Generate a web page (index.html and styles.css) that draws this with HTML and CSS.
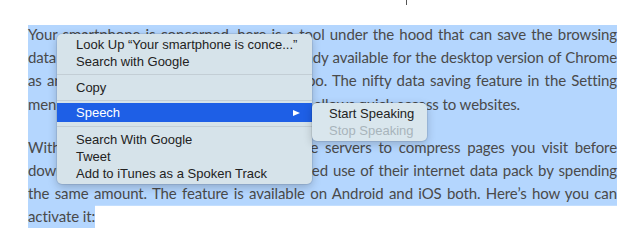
FILE: index.html
```html
<!DOCTYPE html>
<html lang="en">
<head>
<meta charset="utf-8">
<title>Data saver</title>
<link rel="stylesheet" href="styles.css">
</head>
<body>
<div class="caret"></div>
<article class="post">
  <p class="para para-full">Your smartphone is concerned, here is a tool under the hood that can save the browsing data usage in a big way. This feature is already available for the desktop version of Chrome as an extension, and now it is on mobile too. The nifty data saving feature in the Setting menu makes web pages load faster and also allows quick access to websites.</p>
  <p class="para para-partial">With this feature on, Chrome uses Google servers to compress pages you visit before downloading them. Users can make extended use of their internet data pack by spending the same amount. The feature is available on Android and iOS both. Here’s how you can <span class="sel">activate it:</span></p>
</article>
<div class="menu">
  <div class="item">Look Up “Your smartphone is conce...”</div>
  <div class="item">Search with Google</div>
  <div class="sep"></div>
  <div class="item">Copy</div>
  <div class="sep sep-tight"></div>
  <div class="item item-active">
    <span>Speech</span><span class="arrow"></span>
    <div class="submenu">
      <div class="item">Start Speaking</div>
      <div class="item item-disabled">Stop Speaking</div>
    </div>
  </div>
  <div class="sep"></div>
  <div class="item">Search With Google</div>
  <div class="item">Tweet</div>
  <div class="item">Add to iTunes as a Spoken Track</div>
</div>
</body>
</html>
```
FILE: styles.css
```css
html, body {
  margin: 0;
  padding: 0;
  background: #ffffff;
}

body {
  position: relative;
  width: 640px;
  height: 246px;
  overflow: hidden;
}

.caret {
  position: absolute;
  left: 406px;
  top: 0;
  width: 1px;
  height: 5px;
  background: #555;
}

.post {
  margin: 23px 23px 0 28px;
  font-family: "Lato", "Open Sans", sans-serif;
  font-size: 15px;
  letter-spacing: -0.1px;
  line-height: 23.2px;
  color: #4a4a4a;
  text-align: justify;
}

.para {
  margin: 0;
}

.para-full {
  padding-bottom: 20px;
  background: linear-gradient(#b4d6fe, #b4d6fe) 0 2px / 100% 100% no-repeat;
}

.para-partial {
  background: linear-gradient(#b4d6fe, #b4d6fe) 0 0 / 100% calc(100% - 23.2px) no-repeat;
}

.sel {
  background: #b4d6fe;
  padding: 3px 0;
}

.menu {
  position: absolute;
  left: 57px;
  top: 34px;
  width: 255px;
  padding: 2px 0;
  box-sizing: border-box;
  background: #d6e3ea;
  border-radius: 5px;
  box-shadow: 0 3px 10px rgba(0, 0, 0, 0.22), 0 0 0 1px rgba(0, 0, 0, 0.07);
  font-family: "Liberation Sans", Arial, sans-serif;
  font-size: 13px;
  color: #222;
}

.item {
  position: relative;
  height: 17px;
  line-height: 17px;
  padding: 0 12px 0 19px;
  display: flex;
  align-items: center;
  justify-content: space-between;
  white-space: nowrap;
}

.sep {
  height: 1px;
  margin: 4px 0;
  background: #c3ced5;
}

.sep-tight {
  margin-bottom: 2px;
}

.item-active {
  height: 19px;
  line-height: 19px;
  background: #1e5fe6;
  color: #fff;
}

.arrow {
  width: 0;
  height: 0;
  border-left: 7px solid #fff;
  border-top: 3.5px solid transparent;
  border-bottom: 3.5px solid transparent;
}

.submenu {
  position: absolute;
  left: 100%;
  top: 0;
  width: 115px;
  padding: 2px 0;
  box-sizing: border-box;
  background: #d9e6ed;
  border-radius: 5px;
  box-shadow: 0 3px 10px rgba(0, 0, 0, 0.2), 0 0 0 1px rgba(0, 0, 0, 0.07);
  color: #222;
}

.submenu .item {
  padding-left: 17px;
}

.item-disabled {
  color: #a8b4bb;
}
```
